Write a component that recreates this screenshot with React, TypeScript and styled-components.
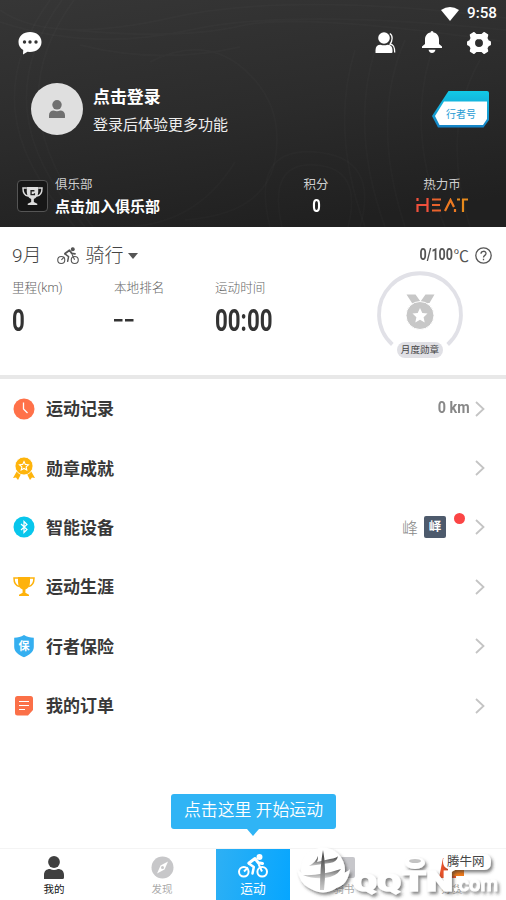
import React from 'react';
import styled, { createGlobalStyle, css } from 'styled-components';

const Global = createGlobalStyle`
  * { box-sizing: border-box; }
  body { margin: 0; background: #fff; font-family: Roboto, "Noto Sans CJK SC", sans-serif; }
  svg { display: block; flex: none; }
`;

const Page = styled.div`
  position: relative;
  width: 506px;
  height: 900px;
  overflow: hidden;
  display: flex;
  flex-direction: column;
  background: #fff;
`;

/* ---------- header ---------- */
const Header = styled.header`
  position: relative;
  height: 227px;
  flex: none;
  color: #fff;
  background: linear-gradient(172deg, #363636 0%, #2b2b2b 50%, #202020 90%);
`;
const Contours = styled.svg`
  position: absolute;
  inset: 0;
`;
const HeaderBody = styled.div`
  position: relative;
`;
const StatusBar = styled.div`
  height: 27px;
  display: flex;
  justify-content: flex-end;
  align-items: center;
  gap: 8px;
  padding-right: 9px;
  font-size: 15.2px;
  font-weight: 500;
  line-height: 27px;
`;
const TopBar = styled.div`
  height: 33px;
  display: flex;
  align-items: center;
  padding: 0 15px 2px 18px;
`;
const TopActions = styled.div`
  margin-left: auto;
  display: flex;
  align-items: center;
  gap: 25px;
`;
const Profile = styled.div`
  height: 98px;
  display: flex;
  align-items: center;
  padding: 0 16px 0 31px;
`;
const Avatar = styled.div`
  width: 52px;
  height: 52px;
  border-radius: 50%;
  background: #dfdfdf;
  display: flex;
  align-items: center;
  justify-content: center;
`;
const ProfileText = styled.div`
  margin-left: 10px;
  padding-top: 6px;
  flex: 1;
`;
const ProfileName = styled.div`
  font-size: 16.9px;
  line-height: 26px;
  font-weight: 700;
`;
const ProfileHint = styled.div`
  font-size: 15px;
  line-height: 30px;
  color: #eee;
`;
const ClubRow = styled.div`
  height: 69px;
  padding: 7px 0 0 17px;
  display: flex;
  align-items: center;
`;
const ClubIcon = styled.div`
  width: 31px;
  height: 32px;
  flex: none;
  border: 1px solid #555;
  border-radius: 4px;
  background: #171717;
  display: flex;
  align-items: center;
  justify-content: center;
`;
const HeaderStat = styled.div<{ $width: number; $left?: boolean }>`
  width: ${p => p.$width}px;
  flex: none;
  padding: 0 0 2px ${p => (p.$left ? 7 : 0)}px;
  display: flex;
  flex-direction: column;
  align-items: ${p => (p.$left ? 'flex-start' : 'center')};
`;
const HeaderLabel = styled.span`
  font-size: 12.5px;
  line-height: 20px;
  color: #cfcfcf;
`;
const HeaderValue = styled.span`
  height: 21px;
  display: flex;
  align-items: center;
  font-size: 15px;
  font-weight: 700;
`;

/* ---------- monthly summary ---------- */
const Num = styled.span<{ $size: number; $scale?: number; $origin?: string }>`
  display: inline-block;
  font-family: Roboto, sans-serif;
  font-size: ${p => p.$size}px;
  line-height: 1;
  font-weight: 700;
  transform: scaleX(${p => p.$scale ?? 0.78});
  transform-origin: ${p => p.$origin ?? 'left'} center;
`;
const Summary = styled.section`
  height: 152px;
  flex: none;
  padding: 17px 14px 0 12px;
  border-bottom: 4px solid #e8e8e8;
  display: flex;
  justify-content: space-between;
`;
const SummaryMain = styled.div`
  width: 340px;
`;
const MonthRow = styled.div`
  height: 24px;
  display: flex;
  align-items: center;
  font-size: 19px;
  font-weight: 300;
  line-height: 24px;
  color: #444;
`;
const Sport = styled.span`
  display: flex;
  align-items: center;
  margin-left: 15px;
  gap: 7px;
`;
const Caret = styled.i`
  margin-left: 4px;
  border: 5.5px solid transparent;
  border-top: 6px solid #555;
  border-bottom: 0;
`;
const Metrics = styled.div`
  display: grid;
  grid-template-columns: 102px 101px 1fr;
  margin-top: 9px;
`;
const Metric = styled.div`
  color: #333;
  display: flex;
  flex-direction: column;
  align-items: flex-start;
`;
const MetricLabel = styled.span`
  font-size: 12.6px;
  line-height: 22px;
  font-weight: 300;
  color: #666;
  white-space: nowrap;
`;
const MetricValue = styled.div`
  height: 43px;
  display: flex;
  align-items: center;
`;
const SummarySide = styled.div`
  width: 130px;
  display: flex;
  flex-direction: column;
  align-items: flex-end;
`;
const HeatRow = styled.div`
  height: 22px;
  display: flex;
  align-items: center;
  color: #555;
  font-size: 15.5px;
`;
const HelpIcon = styled.svg`
  margin-left: 6px;
`;
const MedalWrap = styled.div`
  margin: 5px 28px 0 0;
  display: flex;
  flex-direction: column;
  align-items: center;
`;
const MedalTag = styled.div`
  margin-top: -13px;
  height: 16px;
  padding: 0 4px;
  border-radius: 8px;
  background: #e0e0e5;
  color: #444;
  font-size: 9.6px;
  line-height: 15px;
`;

/* ---------- list ---------- */
const List = styled.main`
  flex: 1;
`;
const Row = styled.div`
  height: 59.4px;
  display: flex;
  align-items: center;
  padding: 0 21px 0 13px;
`;
const RowLabel = styled.span`
  margin-left: 11px;
  padding-top: 1px;
  flex: 1;
  font-size: 17px;
  line-height: 24px;
  font-weight: 700;
  color: #383838;
`;
const RowExtra = styled.div`
  display: flex;
  align-items: center;
  margin-right: 5px;
  color: #888;
  font-size: 16px;
  font-weight: 300;
`;
const DeviceBadge = styled.span`
  width: 22px;
  height: 22px;
  margin: 0 8px 0 6px;
  border-radius: 2px;
  background: #4d5a6c;
  color: #fff;
  font-size: 12.5px;
  font-weight: 700;
  line-height: 22px;
  text-align: center;
`;
const RedDot = styled.i`
  width: 11px;
  height: 11px;
  margin: 0 5px 18px 0;
  border-radius: 50%;
  background: #fb4545;
`;

/* ---------- bottom navigation ---------- */
const TabBar = styled.nav`
  height: 52px;
  flex: none;
  display: flex;
  border-top: 1px solid #f4f4f4;
`;
const Tab = styled.div<{ $tone: 'active' | 'idle' | 'main' }>`
  width: 108px;
  display: flex;
  flex-direction: column;
  align-items: center;
  gap: 2px;
  padding-top: 7px;
  font-size: 10.5px;
  line-height: 18px;
  color: ${p => (p.$tone === 'active' ? '#111' : '#aaa')};
  ${p => p.$tone === 'main' && css`
    width: 74px;
    padding-top: 5px;
    font-size: 12.7px;
    color: #fff;
    background: linear-gradient(100deg, #2eb0f4, #06a6ff);
  `}
`;
const Tooltip = styled.div`
  position: absolute;
  left: 171px;
  top: 794px;
  width: 165px;
  height: 35px;
  border-radius: 3px;
  background: #30b4f5;
  color: #fff;
  font-size: 16.9px;
  font-weight: 350;
  line-height: 33px;
  text-align: center;
  white-space: nowrap;
  &::after {
    content: '';
    position: absolute;
    left: 76px;
    top: 35px;
    border: 6.5px solid transparent;
    border-top: 7px solid #30b4f5;
    border-bottom: 0;
  }
`;
const Watermark = styled.svg`
  position: absolute;
  right: 0;
  bottom: 0;
`;

const Trophy = ({ size, color, letter }: { size: number; color: string; letter?: boolean }) => (
  <svg width={size} height={size} viewBox="0 0 22 22" fill="none">
    <path d="M5 1h12v5c0 4-2 6.500-4.600 7.500v3.200l3.600 2V20H6v-1.300l3.600-2v-3.200C7 12.500 5 10 5 6z" fill={color} />
    <path d="M5 2H1c0 5 2 8 5.500 8.500M17 2h4c0 5-2 8-5.500 8.500" stroke={color} strokeWidth="1.500" />
    {letter && <path d="M13 5H9.500v4H13V7.500" stroke="#222" strokeWidth="1.400" />}
  </svg>
);

const Cyclist = ({ w, color, thick = 1.5 }: { w: number; color: string; thick?: number }) => (
  <svg width={w} height={(w * 24) / 30} viewBox="0 0 30 24" fill="none" stroke={color} strokeWidth={thick}>
    <circle cx="5.800" cy="17.800" r="4.800" />
    <circle cx="24.200" cy="17.800" r="4.800" />
    <circle cx="21.500" cy="3" r="2" fill={color} />
    <path d="M11 9l6-4.500 3.200 4.200 4.300.7" strokeWidth={thick + 1} strokeLinejoin="round" strokeLinecap="round" />
    <path d="M10.800 9.500l5 3.500-1.300 6.500" strokeWidth={thick + 0.5} strokeLinejoin="round" strokeLinecap="round" />
    <path d="M6 17.500l4-4M20.500 10l3.500 7.500" strokeWidth={thick} />
  </svg>
);

const Chevron = () => (
  <svg width="10" height="16" viewBox="0 0 10 16" fill="none" stroke="#c4c4c4" strokeWidth="1.800">
    <path d="M1 1l7.500 7L1 15" />
  </svg>
);

const Person = ({ w, color }: { w: number; color: string }) => (
  <svg width={w} height={(w * 23) / 20} viewBox="0 0 20 23" fill={color}>
    <circle cx="10" cy="6" r="5.900" />
    <path d="M0 23v-4c0-4 2.500-6 6-6 2.500 1.300 5.500 1.300 8 0 3.500 0 6 2 6 6v2.500q0 1.500-1.500 1.500z" />
  </svg>
);

const ClockIcon = () => (
  <svg width="22" height="22" viewBox="0 0 22 22">
    <circle cx="11" cy="11" r="10.500" fill="#ff7149" />
    <path d="M10.500 4.500V11l4 4" fill="none" stroke="#fff" strokeWidth="1.300" />
  </svg>
);
const AwardIcon = () => (
  <svg width="22" height="23" viewBox="0 0 22 23">
    <path d="M4 14L0 21l3-.5L5 23l3-6zM18 14l4 7-3-.5-2 2.500-3-6z" fill="#feb40b" />
    <circle cx="11" cy="9" r="9" fill="#feb40b" stroke="#fff" strokeWidth=".8" />
    <path d="M11 4.500l1.300 2.900 3.200.4-2.400 2.100.7 3.100-2.800-1.600L8.200 13l.7-3.100-2.400-2.100 3.200-.4z" fill="none" stroke="#fff" strokeWidth="1.100" />
  </svg>
);
const BluetoothIcon = () => (
  <svg width="22" height="22" viewBox="0 0 22 22" fill="none">
    <circle cx="11" cy="11" r="10.500" fill="#08c6ec" />
    <path d="M8 8l6 5.500-3 3V5.500l3 3L8 14" stroke="#fff" strokeWidth="1.200" />
  </svg>
);
const ShieldIcon = () => (
  <svg width="22" height="24" viewBox="0 0 22 24">
    <path d="M11 1c3 1.800 6 2.500 9.800 2.700V13c0 5-5 8.500-9.800 10.200C6.200 21.500 1.200 18 1.200 13V3.700C5 3.500 8 2.800 11 1z" fill="#35aff0" />
    <text x="11" y="16" fill="#fff" fontSize="11" fontWeight="700" textAnchor="middle">保</text>
  </svg>
);
const OrderIcon = () => (
  <svg width="22" height="22" viewBox="0 0 22 22">
    <path d="M4.500 1h13Q20 1 20 3.500V15l-5 5.500H4.500Q2 20.500 2 18V3.500Q2 1 4.500 1z" fill="#fb7048" />
    <path d="M6 6.500h10M6 10.500h10M6 14.500h6" stroke="#fff" strokeWidth="1.200" />
  </svg>
);

const rows: { label: string; icon: React.ReactNode; extra?: React.ReactNode }[] = [
  { label: '运动记录', icon: <ClockIcon />, extra: <Num $size={16.5} $scale={0.87} $origin="right">0 km</Num> },
  { label: '勋章成就', icon: <AwardIcon /> },
  { label: '智能设备', icon: <BluetoothIcon />, extra: <>峰<DeviceBadge>峄</DeviceBadge><RedDot /></> },
  { label: '运动生涯', icon: <Trophy size={22} color="#feb20b" /> },
  { label: '行者保险', icon: <ShieldIcon /> },
  { label: '我的订单', icon: <OrderIcon /> },
];

const HeaderContours = () => (
  <Contours width="506" height="227" viewBox="0 0 506 227" fill="none" stroke="#fff" strokeOpacity=".014" strokeWidth="2">
    <path d="M0 10q50 35 170 8t336 0M0 22q90 30 190 8t316 0M70 30q110 10 170-4t260 15M80 45q80 20 160 2M150 62q55-28 95 8t30 90-90 60" />
    <path d="M50 0Q10 55 15 110t60 117M62 0Q22 55 27 110t58 117M74 0Q34 55 39 110t54 117" />
    <path d="M355 50q-25 80 10 177M375 50q-25 80 10 177M405 40q-35 80 0 187M440 30q-40 90 5 197M480 60q-40 70-10 167" />
    <path d="M270 227q-20-80 45-75t45 75M282 227q-15-65 33-62t33 62M120 227q75 0 115-65" />
  </Contours>
);

export default function App() {
  return (
    <Page>
      <Global />
      <Header>
        <HeaderContours />
        <HeaderBody>
          <StatusBar>
            <svg width="18" height="14" viewBox="0 0 18 14" fill="#fff"><path d="M0 3q9-6 18 0L9 14z" /></svg>
            9:58
          </StatusBar>
          <TopBar>
            <svg width="24" height="24" viewBox="0 0 24 24">
              <path d="M12 1c6.500 0 11.500 4 11.500 10S18.500 21 12 21l-2.500-.2L5 23.500l.2-4.500C2 17 .5 14.500.5 11 .5 5 5.500 1 12 1z" fill="#fff" />
              <g fill="#333"><circle cx="6.500" cy="11" r="1.700" /><circle cx="12" cy="11" r="1.700" /><circle cx="18" cy="11" r="1.700" /></g>
            </svg>
            <TopActions>
              <svg width="22" height="22" viewBox="0.500 0 22 22" fill="#fff">
                <circle cx="9.500" cy="6" r="5.800" />
                <path d="M1 21v-3c0-3.500 2-5.300 5-5.300q3.500 1.300 7 0c3 0 5 1.800 5 5.300v2q0 1-1 1z" />
                <path d="M15.300 1.500q2.500 1.500 2.300 5T15.700 12c3.500.8 4.500 3 4.500 8.500" fill="none" stroke="#fff" strokeWidth="1.300" />
              </svg>
              <svg width="20" height="23" viewBox="0 0 20 23" fill="#fff">
                <path d="M8.500 1.500a1.500 1.500 0 013 0C15 2 17 5 17 8.500V13l3 2.500v1.500H0v-1.500L3 13V8.500C3 5 5 2 8.500 1.500zM6.500 18.800h7Q12.500 22 10 22t-3.500-3.200z" />
              </svg>
              <svg width="24" height="24" viewBox="0 0 24 24">
                <path
                  fill="#fff" fillRule="evenodd" stroke="#fff" strokeWidth="1.500" strokeLinejoin="round"
                  d="M7 1.700L9.300 3.800h5.400L17 1.700 20.500 4l-.8 3.200 1.500 2.800 2 1v2.500l-2 1-1.500 2.500.8 3L17 22.300l-2.300-2.100H9.300L7 22.300 3.500 20l.8-3-1.500-2.500-2-1V11l2-1 1.500-2.800L3.500 4zM12 7.300a4.700 4.700 0 100 9.400 4.700 4.700 0 000-9.400z"
                />
              </svg>
            </TopActions>
          </TopBar>
          <Profile>
            <Avatar><Person w={16} color="#707070" /></Avatar>
            <ProfileText>
              <ProfileName>点击登录</ProfileName>
              <ProfileHint>登录后体验更多功能</ProfileHint>
            </ProfileText>
            <svg width="58" height="37" viewBox="0 0 58 37">
              <defs>
                <linearGradient id="tag" x2="0" y2="1"><stop stopColor="#12c9e6" /><stop offset="1" stopColor="#1683c6" /></linearGradient>
              </defs>
              <path d="M16.500 0H55q2 0 2 2v27l-5.500 7.500H6L0 25z" fill="url(#tag)" />
              <path d="M12 10.500h43V28l-4 6H7.500L3 25z" fill="#fff" />
              <text x="29" y="27" fill="#269bd4" fontSize="10" textAnchor="middle">行者号</text>
            </svg>
          </Profile>
          <ClubRow>
            <ClubIcon><Trophy size={21} color="#ddd" letter /></ClubIcon>
            <HeaderStat $width={218} $left>
              <HeaderLabel>俱乐部</HeaderLabel>
              <HeaderValue>点击加入俱乐部</HeaderValue>
            </HeaderStat>
            <HeaderStat $width={100}>
              <HeaderLabel>积分</HeaderLabel>
              <HeaderValue><Num $size={19} $origin="center">0</Num></HeaderValue>
            </HeaderStat>
            <HeaderStat $width={152}>
              <HeaderLabel>热力币</HeaderLabel>
              <HeaderValue>
                <svg width="52" height="14" viewBox="0 0 52 14" fill="none" strokeWidth="2.200">
                  <path d="M1.500 0v3M1.500 14V7h10M11.500 0v14" stroke="#f0503c" />
                  <path d="M16 1.500h9M16 7h8M16 12.500h9" stroke="#e9632d" />
                  <path d="M29 13l5.500-11 3.500 7M39 11v3" stroke="#ed7a22" />
                  <path d="M41 1.500h3M46 1.500h6M47 1v13" stroke="#e78a1c" />
                </svg>
              </HeaderValue>
            </HeaderStat>
          </ClubRow>
        </HeaderBody>
      </Header>

      <Summary>
        <SummaryMain>
          <MonthRow>
            9月
            <Sport><Cyclist w={22} color="#555" thick={1.5} />骑行</Sport>
            <Caret />
          </MonthRow>
          <Metrics>
            <Metric><MetricLabel>里程(km)</MetricLabel><MetricValue><Num $size={31} $scale={0.72}>0</Num></MetricValue></Metric>
            <Metric><MetricLabel>本地排名</MetricLabel><MetricValue>
              <svg width="20" height="3" viewBox="0 0 20 3" fill="#333"><path d="M0 0h8.500v2.500H0zM11 0h8.500v2.500H11z" /></svg>
            </MetricValue></Metric>
            <Metric><MetricLabel>运动时间</MetricLabel><MetricValue><Num $size={31} $scale={0.72}>00:00</Num></MetricValue></Metric>
          </Metrics>
        </SummaryMain>
        <SummarySide>
          <HeatRow>
            <Num $size={16.5} $scale={0.76} $origin="right">0/100</Num>℃
            <HelpIcon width="17" height="17" viewBox="0 0 17 17" fill="none" stroke="#555" strokeWidth="1.300">
              <circle cx="8.500" cy="8.500" r="7.700" />
              <path d="M6 6.700C6 3.500 11 3.500 11 6.500c0 2-2.500 1.800-2.500 4M8.500 11.800v1.500" />
            </HelpIcon>
          </HeatRow>
          <MedalWrap>
            <svg width="88" height="84" viewBox="0 0 88 84">
              <path d="M16.300 73.500A41 41 0 1171.700 73.500" fill="none" stroke="#e1e1e7" strokeWidth="3.800" />
              <g fill="#c7c7c7">
                <path d="M30.500 23.500h9l5 7 5-7h9l-5 8.500H36z" />
                <circle cx="44" cy="44.500" r="14" stroke="#fff" strokeWidth="1" />
              </g>
              <path d="M44 37l2.300 5 5.200.6-3.900 3.600 1.100 5.300-4.700-2.700-4.700 2.700 1.100-5.300-3.900-3.600 5.200-.6z" fill="#fff" />
            </svg>
            <MedalTag>月度勋章</MedalTag>
          </MedalWrap>
        </SummarySide>
      </Summary>

      <List>
        {rows.map(r => (
          <Row key={r.label}>
            {r.icon}
            <RowLabel>{r.label}</RowLabel>
            {r.extra && <RowExtra>{r.extra}</RowExtra>}
            <Chevron />
          </Row>
        ))}
      </List>

      <TabBar>
        <Tab $tone="active"><Person w={20} color="#404040" />我的</Tab>
        <Tab $tone="idle">
          <svg width="23" height="23" viewBox="0 0 23 23">
            <circle cx="11.500" cy="11.500" r="11" fill="#c7c7c9" />
            <path d="M17 5.500l-3.500 8-7.500 4 3.500-8z" fill="#fff" /><circle cx="11.500" cy="11.500" r="1.500" fill="#c7c7c9" />
          </svg>
          发现
        </Tab>
        <Tab $tone="main"><Cyclist w={30} color="#fff" thick={2} />运动</Tab>
        <Tab $tone="idle">
          <svg width="23" height="23" viewBox="0 0 23 23"><rect x="1" y="1" width="21" height="21" rx="2" fill="#c7c7cb" /></svg>
          骑书
        </Tab>
        <Tab $tone="idle">
          <svg width="28" height="23" viewBox="0 0 28 23"><path d="M5 2h13v20H1z" fill="#e8532a" /><path d="M12 9h14v11H12z" fill="#f07a1a" /></svg>
          好货
        </Tab>
      </TabBar>

      <Tooltip>点击这里 开始运动</Tooltip>

      <Watermark width="216" height="60" viewBox="290 840 216 60">
        <defs>
          <filter id="shade" x="-10%" y="-20%" width="125%" height="150%">
            <feDropShadow dx="2" dy="2.500" stdDeviation="1.700" floodColor="#333" floodOpacity=".6" />
          </filter>
          <linearGradient id="horn" x2="0" y2="1"><stop stopColor="#333" /><stop offset="1" stopColor="#ccc" /></linearGradient>
        </defs>
        <g filter="url(#shade)" fill="#fff">
          <ellipse cx="323" cy="870" rx="22" ry="22.500" />
          <path d="M297 868q3 8 25 8t28-7q-2 16-14 19-14 5-27 0-10-5-12-20z" />
          <ellipse cx="415" cy="863" rx="10" ry="6" />
          <path d="M450 854h34q7 0 7 8t-7 8h-29l-7 4v-5q-5-2-5-7 0-8 7-8z" />
          <g fontFamily="Roboto, sans-serif" fontWeight="900" stroke="#fff" strokeWidth="1.200">
            <text x="353" y="891" fontSize="23" textLength="48" lengthAdjust="spacingAndGlyphs">QQ</text>
            <text x="402" y="891" fontSize="28" textLength="51" lengthAdjust="spacingAndGlyphs">TN</text>
            <text x="453" y="891" fontSize="20" fontWeight="500" strokeWidth=".7" textLength="45" lengthAdjust="spacingAndGlyphs">.com</text>
          </g>
        </g>
        <ellipse cx="415" cy="861" rx="6" ry="2" fill="#aaa" opacity=".7" />
        <g fill="url(#horn)">
          <path d="M309 866q7-4 9-10 0 4-1 6l13-3q7-1 8-3-1 6-8 7l-14 2z" />
          <path d="M303 875q17 1 38-6-5 8-16 9-12 1-22-3z" opacity=".75" />
          <path d="M323 850q3.500 17 1 40h-4q0-24 3-40z" />
        </g>
        <text x="447" y="866" fontSize="12.500" fill="#444">腾牛网</text>
      </Watermark>
    </Page>
  );
}
